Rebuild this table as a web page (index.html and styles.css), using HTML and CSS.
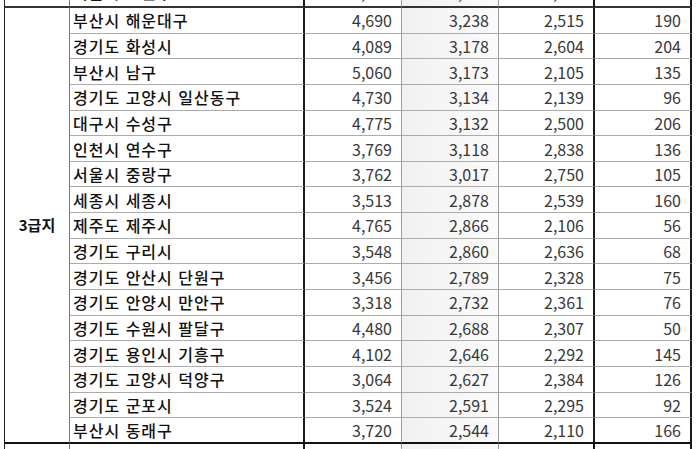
FILE: index.html
```html
<!DOCTYPE html>
<html lang="ko">
<head>
<meta charset="utf-8">
<link rel="stylesheet" href="styles.css">
</head>
<body>
<div class="viewport">
<table class="sheet">
  <colgroup>
    <col class="c-grade"><col class="c-name"><col class="c-num"><col class="c-num"><col class="c-num3"><col class="c-num">
  </colgroup>
  <tbody>
    <tr class="prev">
      <td class="grade"></td><td class="name">서울시 노원구</td><td class="num">4,012</td><td class="num shade">3,275</td><td class="num sep">2,437</td><td class="num last">118</td>
    </tr>
    <tr>
      <td class="grade" rowspan="17">3급지</td><td class="name">부산시 해운대구</td><td class="num">4,690</td><td class="num shade">3,238</td><td class="num sep">2,515</td><td class="num last">190</td>
    </tr>
    <tr><td class="name">경기도 화성시</td><td class="num">4,089</td><td class="num shade">3,178</td><td class="num sep">2,604</td><td class="num last">204</td></tr>
    <tr><td class="name">부산시 남구</td><td class="num">5,060</td><td class="num shade">3,173</td><td class="num sep">2,105</td><td class="num last">135</td></tr>
    <tr><td class="name">경기도 고양시 일산동구</td><td class="num">4,730</td><td class="num shade">3,134</td><td class="num sep">2,139</td><td class="num last">96</td></tr>
    <tr><td class="name">대구시 수성구</td><td class="num">4,775</td><td class="num shade">3,132</td><td class="num sep">2,500</td><td class="num last">206</td></tr>
    <tr><td class="name">인천시 연수구</td><td class="num">3,769</td><td class="num shade">3,118</td><td class="num sep">2,838</td><td class="num last">136</td></tr>
    <tr><td class="name">서울시 중랑구</td><td class="num">3,762</td><td class="num shade">3,017</td><td class="num sep">2,750</td><td class="num last">105</td></tr>
    <tr><td class="name">세종시 세종시</td><td class="num">3,513</td><td class="num shade">2,878</td><td class="num sep">2,539</td><td class="num last">160</td></tr>
    <tr><td class="name">제주도 제주시</td><td class="num">4,765</td><td class="num shade">2,866</td><td class="num sep">2,106</td><td class="num last">56</td></tr>
    <tr><td class="name">경기도 구리시</td><td class="num">3,548</td><td class="num shade">2,860</td><td class="num sep">2,636</td><td class="num last">68</td></tr>
    <tr><td class="name">경기도 안산시 단원구</td><td class="num">3,456</td><td class="num shade">2,789</td><td class="num sep">2,328</td><td class="num last">75</td></tr>
    <tr><td class="name">경기도 안양시 만안구</td><td class="num">3,318</td><td class="num shade">2,732</td><td class="num sep">2,361</td><td class="num last">76</td></tr>
    <tr><td class="name">경기도 수원시 팔달구</td><td class="num">4,480</td><td class="num shade">2,688</td><td class="num sep">2,307</td><td class="num last">50</td></tr>
    <tr><td class="name">경기도 용인시 기흥구</td><td class="num">4,102</td><td class="num shade">2,646</td><td class="num sep">2,292</td><td class="num last">145</td></tr>
    <tr><td class="name">경기도 고양시 덕양구</td><td class="num">3,064</td><td class="num shade">2,627</td><td class="num sep">2,384</td><td class="num last">126</td></tr>
    <tr><td class="name">경기도 군포시</td><td class="num">3,524</td><td class="num shade">2,591</td><td class="num sep">2,295</td><td class="num last">92</td></tr>
    <tr class="end"><td class="name">부산시 동래구</td><td class="num">3,720</td><td class="num shade">2,544</td><td class="num sep">2,110</td><td class="num last">166</td></tr>
    <tr class="next">
      <td class="grade"></td><td class="name"></td><td class="num"></td><td class="num shade"></td><td class="num sep"></td><td class="num last"></td>
    </tr>
  </tbody>
</table>
</div>
</body>
</html>
```

FILE: styles.css
```css
* { box-sizing: border-box; }

html, body {
  margin: 0;
  padding: 0;
  background: #ffffff;
}

.viewport {
  width: 698px;
  height: 449px;
  overflow: hidden;
}

.sheet {
  table-layout: fixed;
  border-collapse: separate;
  border-spacing: 0;
  width: 688px;
  margin-left: 4px;
  margin-top: -18px;
  font-family: "Noto Sans CJK KR", "Noto Sans", sans-serif;
  font-size: 16px;
  line-height: 20px;
}

.c-grade { width: 66px; }
.c-name { width: 235px; }
.c-num { width: 97px; }
.c-num3 { width: 96px; }

.sheet td {
  height: 25.65px;
  padding: 0;
  border-bottom: 1px solid #ababab;
  border-right: 1px solid #9a9a9a;
  white-space: nowrap;
  overflow: hidden;
  vertical-align: middle;
}

.sheet tr.prev td {
  height: 26px;
  border-bottom: 2px solid #333333;
  vertical-align: bottom;
  padding-bottom: 4px;
}

.sheet tr.end td {
  border-bottom: 2px solid #111111;
}

.sheet tr.next td {
  height: 20px;
}

.sheet td.grade {
  border-left: 1px solid #222222;
  border-right: 1px solid #7a7a7a;
  border-bottom: 2px solid #111111;
  text-align: center;
  font-size: 15px;
  font-weight: 700;
  color: #111111;
}

.sheet tr.prev td.grade {
  border-bottom: 2px solid #333333;
}

.sheet td.name {
  padding-left: 3px;
  font-weight: 500;
  letter-spacing: 1px;
  color: #111111;
  border-right: 2px solid #1a1a1a;
}

.sheet td.num {
  text-align: right;
  padding-right: 9px;
  color: #383838;
}

.sheet td.shade {
  background: linear-gradient(to right, #f1f1f1, #fbfbfb);
}

.sheet td.sep,
.sheet td.last {
  border-right: 2px solid #1a1a1a;
}
```
